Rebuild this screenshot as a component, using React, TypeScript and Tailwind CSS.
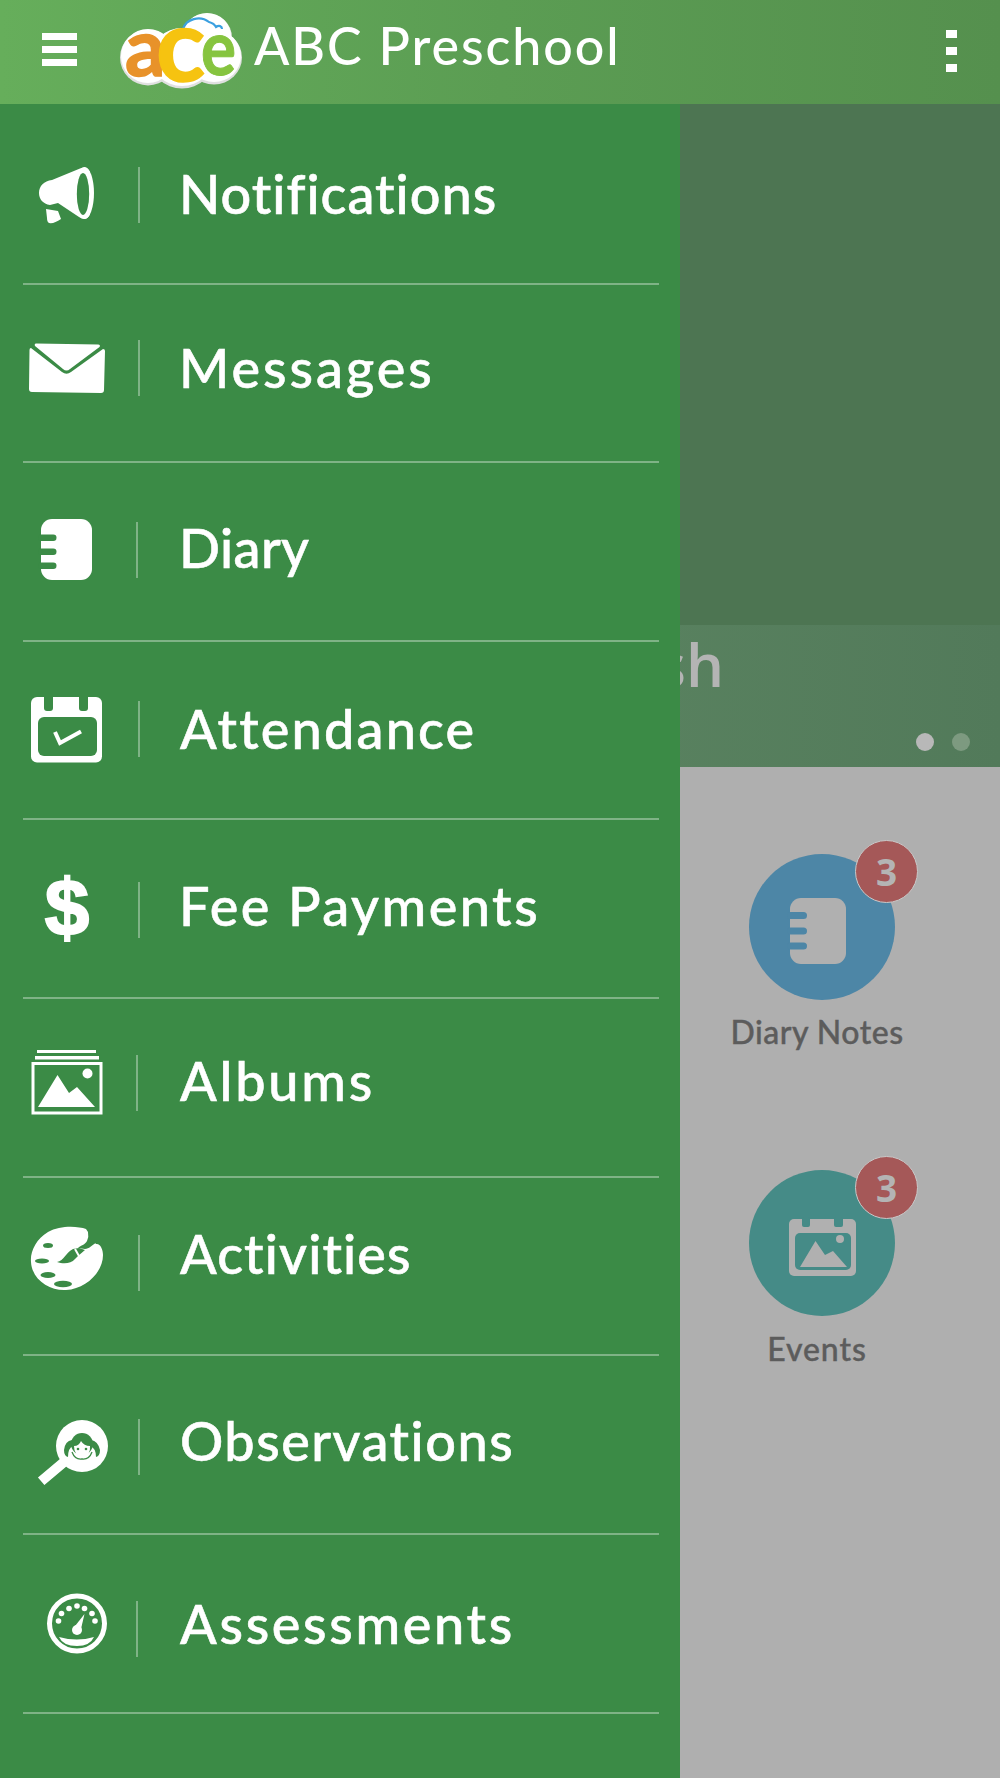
import React from "react";

const G = "#3b8b46";

function I({ y, children }: { y: number; children: React.ReactNode }) {
  return (
    <svg width={110} height={90} viewBox={`23 ${y} 110 90`} fill="none" className="block overflow-visible">
      {children}
    </svg>
  );
}

const icons = {
  megaphone: (
    <I y={150}>
      <path d="M52 180 L80 168.5 C84 166.5 88 167 90 172 L 90 214 C88 220 83 220 79 217 L58 203 L50 205 C43 204 39 199 39 193 C39 186 44 181 52 180 Z" fill="#fff" />
      <ellipse cx="84.5" cy="193" rx="9.5" ry="26" fill="#fff" />
      <ellipse cx="83" cy="194" rx="6.2" ry="21" fill={G} />
      <path d="M46 209 L58 211 L61 219 Q54 224 49 223 Q47 222 47 218 Z" fill="#fff" />
    </I>
  ),
  mail: (
    <I y={323}>
      <path d="M36 343.5 L98 344.5 Q101 345 99.5 347 L70 369 Q66.500 372 63 369 L35 346 Q34 344 36 343.5 Z" fill="#fff" />
      <path d="M31 348 L62 372 Q66.500 375.500 71 372 L103 349 Q105 349 105 351 L104 390 Q104 393 101 393 L32 392 Q29 392 29 389 L29.500 350 Q29.500 348 31 348 Z" fill="#fff" />
    </I>
  ),
  diary: (
    <I y={505}>
      <rect x="41" y="519" width="51" height="61" rx="11" fill="#fff" />
      <rect x="38" y="534.500" width="18.500" height="6.500" rx="3.250" fill={G} />
      <rect x="38" y="548.500" width="18.500" height="6.500" rx="3.250" fill={G} />
      <rect x="38" y="562.500" width="18.500" height="6.500" rx="3.250" fill={G} />
    </I>
  ),
  calendar: (
    <I y={684}>
      <rect x="31" y="697" width="71" height="65.500" rx="6" fill="#fff" />
      <path d="M44 695 H53 V708 Q53 711 50 711 H47 Q44 711 44 708 Z" fill={G} />
      <path d="M79 695 H88 V708 Q88 711 85 711 H82 Q79 711 79 708 Z" fill={G} />
      <rect x="38" y="717" width="59" height="39" rx="6" fill={G} />
      <path d="M55 732 L60 743 L81 731.500" stroke="#fff" strokeWidth="4" />
    </I>
  ),
  dollar: (
    <I y={865}>
      <text x="67" y="935" textAnchor="middle" fontFamily="'Liberation Sans',sans-serif" fontWeight="700" fontSize="80" fill="#fff" stroke="#fff" strokeWidth="2">$</text>
    </I>
  ),
  albums: (
    <I y={1038}>
      <rect x="37" y="1050" width="59" height="3" fill="#fff" />
      <rect x="35" y="1056" width="64" height="3.500" fill="#fff" />
      <rect x="33" y="1063.500" width="68" height="49.500" stroke="#fff" strokeWidth="3" />
      <path d="M38 1107 L57.500 1075 L69 1093 L77 1087 L95 1107 Z" fill="#fff" />
      <circle cx="87.500" cy="1073.500" r="5" fill="#fff" />
    </I>
  ),
  palette: (
    <I y={1218}>
      <path d="M86 1229 C78 1226 60 1225 48 1232 C36 1239 30 1252 31 1262 C32 1280 50 1291 66 1290 C86 1289 103 1272 103 1255 C103 1249 100 1243 96 1244 Z" fill="#fff" />
      <path d="M89 1232 L106 1232 L106 1243 L96 1243 C92 1245 89 1249 85 1249 L78 1248 C81 1245 85 1245 87 1241 Q89 1237 88 1232 Z" fill={G} />
      <path d="M57 1262 C64 1261 66 1252 73 1249 L79 1248 L85 1250 L78 1256 L75 1259 C71 1264 63 1264 57 1262 Z" fill={G} />
      <path d="M75 1249 L79 1256" stroke="#fff" strokeWidth="2" />
      <ellipse cx="48" cy="1245.500" rx="5" ry="2.500" fill={G} />
      <ellipse cx="42" cy="1261" rx="7" ry="2.500" fill={G} />
      <ellipse cx="48" cy="1275" rx="7.500" ry="3" fill={G} />
      <ellipse cx="63" cy="1284" rx="9" ry="3.200" fill={G} />
    </I>
  ),
  observe: (
    <I y={1402}>
      <circle cx="82" cy="1446" r="26" fill="#fff" />
      <path d="M70 1457 L45 1478" stroke="#fff" strokeWidth="10" strokeLinecap="square" />
      <circle cx="82" cy="1444" r="11" fill={G} />
      <path d="M72 1440 Q65 1441 64 1450 Q64 1456 68 1457 Q68 1448 73 1446 Z" fill={G} />
      <path d="M91 1440 Q98 1441 100 1450 Q100 1456 96 1457 Q96 1448 90 1446 Z" fill={G} />
      <path d="M74 1446 Q79 1446 81 1441 Q84 1446 90 1446 Q91 1456 82 1456 Q74 1456 74 1446 Z" fill="#fff" />
      <circle cx="78" cy="1449" r="1.300" fill={G} />
      <circle cx="86" cy="1449" r="1.300" fill={G} />
      <path d="M72 1452 Q75 1460 82 1459 Q89 1460 92 1452" stroke={G} strokeWidth="1.300" />
    </I>
  ),
  gauge: (
    <I y={1584}>
      <circle cx="77" cy="1623.500" r="27.500" stroke="#fff" strokeWidth="5" />
      {[[58.500, 1621], [61.500, 1613.500], [69, 1608.500], [77, 1606], [84.500, 1608.500], [92, 1613.500], [95, 1621]].map(([x, y]) => (
        <circle key={x} cx={x} cy={y} r="2.800" fill="#fff" />
      ))}
      <circle cx="77" cy="1630" r="5" fill="#fff" />
      <path d="M73.500 1628 L84.500 1614 L80.500 1631 Z" fill="#fff" />
      <path d="M59 1637 Q77 1642 94 1637 Q90 1646 77 1646 Q63 1646 59 1637 Z" fill="#fff" />
    </I>
  ),
};

const rows = [
  { label: "Notifications", icon: icons.megaphone, row: "h-[181px]", top: "pt-[46px]", cell: "w-[115px]", gap: "ml-[39px]", text: "mt-[16px] tracking-[1px]" },
  { label: "Messages", icon: icons.mail, row: "h-[178px]", top: "pt-[38px]", cell: "w-[115px]", gap: "ml-[39px]", text: "mt-[17px] tracking-[3px]" },
  { label: "Diary", icon: icons.diary, row: "h-[179px]", top: "pt-[42px]", cell: "w-[113px]", gap: "ml-[41px]", text: "mt-[15px] tracking-[0.4px]" },
  { label: "Attendance", icon: icons.calendar, row: "h-[178px]", top: "pt-[42px]", cell: "w-[115px]", gap: "ml-[40px]", text: "mt-[17px] tracking-[2.2px]" },
  { label: "Fee Payments", icon: icons.dollar, row: "h-[179px]", top: "pt-[45px]", cell: "w-[115px]", gap: "ml-[39px]", text: "mt-[13px] tracking-[2.5px]" },
  { label: "Albums", icon: icons.albums, row: "h-[179px]", top: "pt-[39px]", cell: "w-[113px]", gap: "ml-[42px]", text: "mt-[15px] tracking-[2.8px]" },
  { label: "Activities", icon: icons.palette, row: "h-[178px]", top: "pt-[40px]", cell: "w-[115px]", gap: "ml-[40px]", text: "mt-[8px] tracking-[1.1px]" },
  { label: "Observations", icon: icons.observe, row: "h-[179px]", top: "pt-[46px]", cell: "w-[115px]", gap: "ml-[40px]", text: "mt-[11px] tracking-[1.5px]" },
  { label: "Assessments", icon: icons.gauge, row: "h-[179px]", top: "pt-[49px]", cell: "w-[113px]", gap: "ml-[42px]", text: "mt-[12px] tracking-[2.7px]" },
];

function Badge() {
  return (
    <div className="absolute left-[106px] top-[-14px] flex h-[63px] w-[63px] items-center justify-center rounded-full border border-[#c9c9c9] bg-[#a55858] font-['Open_Sans',sans-serif] text-[37px] font-bold leading-none text-[#b4b4b4]">
      3
    </div>
  );
}

function Logo() {
  return (
    <svg width={130} height={80} viewBox="116 6 130 80" className="block overflow-visible">
      <g fill="#e0e0e0" transform="translate(0 1.500)">
        <ellipse cx="148" cy="53" rx="28" ry="28" />
        <ellipse cx="182" cy="54" rx="32" ry="30" />
        <ellipse cx="214" cy="53" rx="28" ry="27" />
        <ellipse cx="207" cy="33" rx="25" ry="24" />
      </g>
      <g fill="#fff">
        <ellipse cx="148" cy="53" rx="27" ry="27" />
        <ellipse cx="182" cy="54" rx="31" ry="29" />
        <ellipse cx="214" cy="53" rx="27" ry="26" />
        <ellipse cx="207" cy="33" rx="24" ry="23" />
      </g>
      <path d="M183 26 C186 16 200 12 209 19 C213 20 215 22 216 24 C219 22 222 23 222 26" stroke="#3ba0e0" strokeWidth="2.200" fill="none" />
      <text x="125" y="73" fontFamily="'Lato',sans-serif" fontWeight="700" fontSize="80" fill="#e8922a" stroke="#e8922a" strokeWidth="1.500">a</text>
      <text x="201" y="72" textLength="35" lengthAdjust="spacingAndGlyphs" fontFamily="'Lato',sans-serif" fontWeight="700" fontSize="76" fill="#86c43f" stroke="#86c43f" strokeWidth="1">e</text>
      <text x="156" y="78" fontFamily="'Lato',sans-serif" fontWeight="700" fontSize="102" fill="#f6c310" stroke="#f6c310" strokeWidth="1.500">c</text>
    </svg>
  );
}

export default function App() {
  return (
    <div className="relative h-[1778px] w-[1000px] overflow-hidden bg-[#afafaf] font-['Lato',sans-serif]">
      <header className="flex h-[104px] items-center bg-gradient-to-r from-[#66ae5b] via-[#5b9d53] to-[#55904e]">
        <div className="ml-[42px] mt-[-5px] flex w-[35px] flex-col gap-[6px]">
          <span className="h-[7px] bg-white" />
          <span className="h-[7px] bg-white" />
          <span className="h-[7px] bg-white" />
        </div>
        <div className="ml-[39px] mt-[-7px]">
          <Logo />
        </div>
        <span className="ml-[8px] mt-[-14px] text-[52px] font-medium leading-none tracking-[1.9px] text-white">ABC Preschool</span>
        <div className="ml-auto mr-[43px] flex w-[11px] flex-col gap-[9px] mt-[-3px]">
          <span className="h-[8px] bg-white" />
          <span className="h-[8px] bg-white" />
          <span className="h-[8px] bg-white" />
        </div>
      </header>

      <div className="h-[521px] bg-[#4d7552]" />
      <div className="relative flex h-[142px] bg-gradient-to-r from-[#5f8463] via-[#5b8461] to-[#527a5a]">
        <div className="flex w-[724px] justify-end font-['Open_Sans',sans-serif] text-[60px] font-semibold leading-[70px] text-[#b4b4b4] pt-[4px]">English</div>
        <div className="ml-[192px] mt-[108px] flex gap-[18px]">
          <span className="h-[18px] w-[18px] rounded-full bg-[#b8b8b8]" />
          <span className="h-[18px] w-[18px] rounded-full bg-[#7d9a80]" />
        </div>
      </div>

      <div className="ml-[749px] flex w-[146px] flex-col pt-[87px]">
        <div className="h-[316px]">
          <div className="relative flex h-[146px] w-[146px] items-center justify-center rounded-full bg-[#4d86a6]">
            <svg width={146} height={146} viewBox="749 854 146 146" className="block">
              <rect x="790" y="898" width="56" height="66" rx="11" fill="#b0b0b0" />
              <rect x="787" y="912" width="20" height="7" rx="3.500" fill="#4d86a6" />
              <rect x="787" y="927.500" width="20" height="7" rx="3.500" fill="#4d86a6" />
              <rect x="787" y="942.500" width="20" height="7" rx="3.500" fill="#4d86a6" />
            </svg>
            <Badge />
          </div>
          <div className="ml-[-40px] mt-[14px] w-[216px] text-center text-[32px] font-medium leading-[36px] tracking-[0.5px] text-[#5c5c5c] [-webkit-text-stroke:0.4px_#5c5c5c]">Diary Notes</div>
        </div>
        <div className="relative flex h-[146px] w-[146px] items-center justify-center rounded-full bg-[#458b87]">
          <svg width={146} height={146} viewBox="749 1170 146 146" className="block">
            <rect x="789" y="1219" width="67" height="57" rx="5" fill="#b0b0b0" />
            <rect x="802" y="1217" width="8" height="10" rx="2" fill="#458b87" />
            <rect x="834" y="1217" width="9" height="10" rx="2" fill="#458b87" />
            <rect x="795" y="1233" width="56" height="37" rx="5" fill="#458b87" />
            <path d="M800 1267 L815.500 1241 L825 1255 L833 1251 L847 1267 Z" fill="#b0b0b0" />
            <circle cx="840" cy="1239" r="4" fill="#b0b0b0" />
          </svg>
          <Badge />
        </div>
        <div className="ml-[-40px] mt-[15px] w-[216px] text-center text-[32px] font-medium leading-[36px] tracking-[0.9px] text-[#5c5c5c] [-webkit-text-stroke:0.4px_#5c5c5c]">Events</div>
      </div>

      <nav className="absolute left-0 top-[104px] h-[1674px] w-[680px] bg-[#3b8b46]">
        {rows.map((r) => (
          <div key={r.label} className={`${r.row} ${r.top} ml-[23px] w-[636px] border-b-2 border-white/35`}>
            <div className="flex h-[90px] items-start">
              <div className={`${r.cell} shrink-0`}>{r.icon}</div>
              <span className="mt-[17px] h-[56px] w-[2px] shrink-0 bg-white/35" />
              <span className={`${r.gap} ${r.text} whitespace-nowrap text-[54px] font-medium leading-[56px] text-white [-webkit-text-stroke:0.6px_white]`}>{r.label}</span>
            </div>
          </div>
        ))}
      </nav>
    </div>
  );
}
